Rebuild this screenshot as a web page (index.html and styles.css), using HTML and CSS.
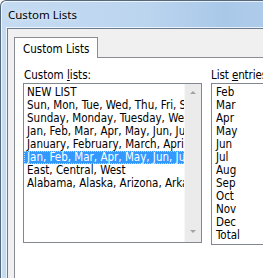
FILE: index.html
```html
<!DOCTYPE html>
<html lang="en">
<head>
    <meta charset="UTF-8">
    <meta name="viewport" content="width=device-width, initial-scale=1.0">
    <title>Custom Lists</title>
    <link rel="stylesheet" href="styles.css">
</head>
<body>
    <div class="window">
        <div class="titlebar">Custom Lists</div>
        <div class="client">
            <div class="tabstrip">
                <div class="tab active">Custom Lists</div>
                <div class="tab-fill"></div>
            </div>
            <div class="tabpanel">
                <div class="field lists">
                    <label class="field-label">Custom <u>l</u>ists:</label>
                    <div class="listbox">
                        <ul class="items">
                            <li>NEW LIST</li>
                            <li>Sun, Mon, Tue, Wed, Thu, Fri, Sat</li>
                            <li>Sunday, Monday, Tuesday, Wednesday, Thursday</li>
                            <li>Jan, Feb, Mar, Apr, May, Jun, Jul, Aug</li>
                            <li>January, February, March, April, May</li>
                            <li class="selected">Jan, Feb, Mar, Apr, May, Jun, Jul, Aug</li>
                            <li>East, Central, West</li>
                            <li>Alabama, Alaska, Arizona, Arkansas</li>
                        </ul>
                        <div class="scrollbar">
                            <span class="arrow up"></span>
                            <span class="arrow down"></span>
                        </div>
                    </div>
                </div>
                <div class="field entries">
                    <label class="field-label">List <u>e</u>ntries:</label>
                    <ul class="entrybox">
                        <li>Feb</li>
                        <li>Mar</li>
                        <li>Apr</li>
                        <li>May</li>
                        <li>Jun</li>
                        <li>Jul</li>
                        <li>Aug</li>
                        <li>Sep</li>
                        <li>Oct</li>
                        <li>Nov</li>
                        <li>Dec</li>
                        <li>Total</li>
                    </ul>
                </div>
            </div>
        </div>
    </div>
</body>
</html>
```

FILE: styles.css
```css
* {
    margin: 0;
    padding: 0;
    box-sizing: border-box;
}

body {
    width: 263px;
    height: 278px;
    overflow: hidden;
    background: #ffffff;
    font-family: "DejaVu Sans Condensed", "DejaVu Sans", sans-serif;
    font-size: 11.5px;
    line-height: 13px;
    color: #000;
}

/* window frame (Aero glass) */
.window {
    width: 320px;
    height: 320px;
    border-top: 1px solid #56687c;
    border-left: 1px solid #56687c;
    border-top-left-radius: 6px;
    padding-left: 6px;
    background: linear-gradient(to right, #c4dbf2 0%, #bcd5ef 45%, #a9c8e8 70%, #b6d0ec 100%);
    box-shadow: inset 1px 1px 0 rgba(255, 255, 255, 0.7);
}

.titlebar {
    height: 27px;
    padding: 6px 0 0 1px;
    font-family: "Noto Sans", sans-serif;
    font-size: 11.5px;
    line-height: 16px;
    color: #000;
    text-shadow: 0 0 6px rgba(255, 255, 255, 0.9);
}

.client {
    height: 300px;
    background: #f0f0f0;
    border-top: 1px solid #6c7b8d;
    border-left: 1px solid #6c7b8d;
    box-shadow: -1px -1px 0 rgba(255, 255, 255, 0.7);
    padding: 8px 0 0 6px;
}

/* tabs */
.tabstrip {
    display: flex;
}

.tab {
    width: 84px;
    height: 21px;
    padding: 5px 0 0 8px;
    border: 1px solid #898c95;
    border-bottom: none;
    background: #ffffff;
}

.tab-fill {
    flex: 1;
    border-bottom: 1px solid #898c95;
}

.tabpanel {
    display: flex;
    gap: 9px;
    height: 240px;
    padding: 11px 0 0 8px;
    background: #ffffff;
    border-left: 1px solid #898c95;
}

.field-label {
    display: block;
    margin-bottom: 1px;
    padding-left: 1px;
    white-space: nowrap;
}

.entries .field-label {
    padding-left: 0;
    letter-spacing: -0.1px;
}

.field-label u {
    text-underline-offset: 1px;
}

/* custom lists listbox */
.listbox {
    display: flex;
    width: 179px;
    height: 160px;
    border: 1px solid #828790;
}

.items {
    flex: 1;
    min-width: 0;
    list-style: none;
    padding-top: 2px;
    overflow: hidden;
}

.items li {
    height: 13px;
    padding-left: 3px;
    white-space: nowrap;
    overflow: hidden;
}

.items li.selected {
    background: #3399ff;
    color: #ffffff;
    outline: 1px dotted rgba(255, 255, 255, 0.6);
    outline-offset: -1px;
}

.scrollbar {
    width: 17px;
    flex: none;
    display: flex;
    flex-direction: column;
    justify-content: space-between;
    align-items: center;
    padding: 7px 0 9px;
    background: #ebebeb;
    border-left: 1px solid #f7f7f7;
}

.arrow {
    width: 0;
    height: 0;
    border-left: 3px solid transparent;
    border-right: 3px solid transparent;
}

.arrow.up {
    border-bottom: 3px solid #a3a3a3;
}

.arrow.down {
    border-top: 3px solid #a3a3a3;
}

/* list entries box */
.entrybox {
    width: 80px;
    height: 162px;
    list-style: none;
    padding: 2px 0 0 4px;
    border: 1px solid #828790;
    border-right: none;
}

.entrybox li {
    height: 13px;
}
```
